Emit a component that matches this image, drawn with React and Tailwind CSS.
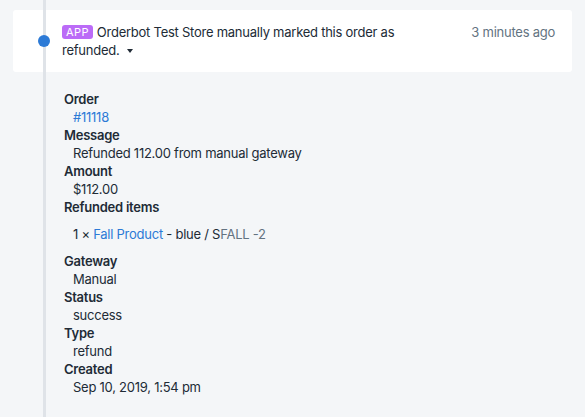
const Field = ({ label, children, className = '' }) => (
  <div className={className}>
    <div className="font-semibold text-[#212b36]">{label}</div>
    <div className="pl-[9px] text-[#212b36]">{children}</div>
  </div>
);

export default function App() {
  return (
    <div
      className="relative w-[585px] h-[417px] overflow-hidden bg-[#f4f6f8] text-[13px] leading-[18px] tracking-[-0.25px] text-[#212b36]"
      style={{ fontFamily: 'Inter, "Noto Sans", sans-serif' }}
    >
      {/* timeline rail */}
      <div className="absolute left-[43px] top-0 bottom-0 w-[3px] bg-[#dfe3e8] z-10"></div>
      <div className="absolute left-[38px] top-[35px] w-[12px] h-[12px] rounded-full bg-[#2c7ad6] z-20"></div>

      <div className="mx-[13px] mt-[10px] h-[62px] rounded-[3px] bg-white pl-[49px] pr-[17px] pt-[13px] flex justify-between">
        <div className="w-[345px]">
          <span className="inline-block align-[1px] mr-[4px] px-[4px] rounded-[3px] bg-[#bb6bf7] text-white text-[11px] leading-[14px] tracking-[0.4px]">
            APP
          </span>
          Orderbot Test Store manually marked this order as refunded.
          <span className="inline-block ml-[8px] align-middle w-0 h-0 border-l-[3.5px] border-r-[3.5px] border-t-[4px] border-l-transparent border-r-transparent border-t-[#212b36]"></span>
        </div>
        <div className="text-[#637381] whitespace-nowrap">3 minutes ago</div>
      </div>

      <div className="pl-[64px] pt-[18px]">
        <Field label="Order">
          <span className="text-[#2c7ad6]">#11118</span>
        </Field>
        <Field label="Message">Refunded 112.00 from manual gateway</Field>
        <Field label="Amount">$112.00</Field>
        <div className="font-semibold">Refunded items</div>
        <div className="pl-[9px] my-[9px]">
          1 × <span className="text-[#2c7ad6]">Fall Product</span> - blue / S
          <span className="text-[#637381]">FALL -2</span>
        </div>
        <Field label="Gateway">Manual</Field>
        <Field label="Status">success</Field>
        <Field label="Type">refund</Field>
        <Field label="Created">Sep 10, 2019, 1:54 pm</Field>
      </div>
    </div>
  );
}
